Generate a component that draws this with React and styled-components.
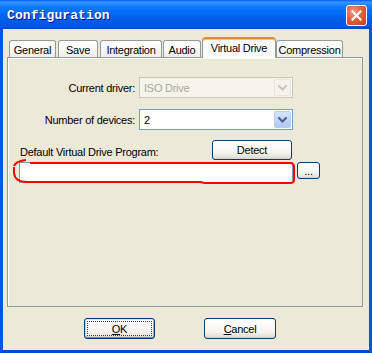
import React from 'react';
import styled, { createGlobalStyle, css } from 'styled-components';

const Global = createGlobalStyle`
  html, body { margin: 0; padding: 0; background: #ffffff; }
  body { font-family: "Liberation Sans", Arial, sans-serif; font-size: 11px; letter-spacing: -0.25px; }
  * { box-sizing: border-box; }
`;

const Window = styled.div`
  width: 372px;
  height: 353px;
  display: flex;
  flex-direction: column;
`;

const TitleBar = styled.div`
  height: 29px;
  flex: none;
  display: flex;
  align-items: center;
  justify-content: space-between;
  padding: 2px 5px 0 7px;
  background: linear-gradient(180deg, #0058ee 0%, #3a93ff 7%, #288eff 13%, #127dff 22%, #036ffc 38%, #0262ee 60%, #0057e5 80%, #0054e3 92%, #0043cf 100%);
`;

const Title = styled.span`
  font-family: "Liberation Mono", "DejaVu Sans Mono", monospace;
  font-weight: bold;
  font-size: 13px;
  color: #ffffff;
  text-shadow: 1px 1px 0 #0a1883;
  letter-spacing: 0.1px;
`;

const CloseButton = styled.div`
  width: 21px;
  height: 21px;
  border: 1px solid #ffffff;
  border-radius: 3px;
  background: radial-gradient(circle at 35% 30%, #f39a7c 0%, #e2603f 45%, #c63e1c 100%);
  display: flex;
  align-items: center;
  justify-content: center;
`;

const Client = styled.div`
  flex: 1;
  display: flex;
  flex-direction: column;
  background: #ece9d8;
  border-left: 3px solid #0055e5;
  border-right: 3px solid #0055e5;
  border-bottom: 3px solid #0048d8;
  padding: 8px 0 0 4px;
`;

const TabStrip = styled.div`
  height: 20px;
  margin-left: 2px;
  display: flex;
  align-items: flex-start;
  position: relative;
  z-index: 1;
`;

const Tab = styled.div`
  width: ${p => p.$w}px;
  margin-left: ${p => p.$ml}px;
  height: 17px;
  margin-top: 3px;
  border: 1px solid #919b9c;
  border-bottom: none;
  border-radius: 3px 3px 0 0;
  background: linear-gradient(180deg, #ffffff 0%, #fafaf8 40%, #f0efe8 100%);
  color: #000;
  display: flex;
  align-items: center;
  justify-content: center;
  padding-top: 1px;
  white-space: nowrap;
  ${p => p.$active && css`
    height: 21px;
    margin-top: 0;
    border-top: 2px solid #e68b2c;
    border-radius: 4px 4px 0 0;
    box-shadow: inset 0 1px 0 #ffc73c;
    background: #fcfcfe;
    align-items: flex-start;
    padding-top: 3px;
  `}
`;

const Panel = styled.div`
  width: 356px;
  height: 250px;
  border: 1px solid #919b9c;
  background: #ece9d8;
  box-shadow: inset 1px 1px 0 #fcfcfe;
  position: relative;
  padding: 19px 0 0 11px;
`;

const FieldGrid = styled.div`
  display: grid;
  grid-template-columns: 116px 154px;
  column-gap: 4px;
  row-gap: 11px;
  align-items: center;
`;

const RowLabel = styled.span`
  text-align: right;
  color: #000;
  white-space: nowrap;
`;

const Combo = styled.div`
  height: 21px;
  border: 1px solid ${p => (p.$disabled ? '#c9c7ba' : '#7f9db9')};
  background: ${p => (p.$disabled ? '#f5f4ea' : '#ffffff')};
  display: flex;
  align-items: center;
  padding: 1px;
`;

const ComboText = styled.span`
  flex: 1;
  padding-left: 3px;
  color: ${p => (p.$disabled ? '#aca899' : '#000')};
`;

const ComboArrow = styled.div`
  width: 17px;
  height: 17px;
  border-radius: 2px;
  display: flex;
  align-items: center;
  justify-content: center;
  ${p => p.$disabled
    ? css`
      background: #f4f3ee;
      border: 1px solid #e8e6dc;
    `
    : css`
      background: linear-gradient(180deg, #d9e4fd 0%, #c4d5fd 50%, #b3c8f7 100%);
      border: 1px solid #b9cdf8;
    `}
`;

const ProgramSection = styled.div`
  width: 274px;
  margin-top: 10px;
  display: flex;
  flex-direction: column;
  gap: 2px;
`;

const ProgramHeader = styled.div`
  display: flex;
  justify-content: space-between;
  align-items: flex-end;
  padding-left: 1px;
  padding-right: 1px;
`;

const PlainLabel = styled.span`
  color: #000;
  white-space: nowrap;
  line-height: 13px;
  padding-bottom: 1px;
`;

const ProgramRow = styled.div`
  display: flex;
  align-items: flex-start;
  gap: 4px;
`;

const TextField = styled.div`
  width: 274px;
  flex: none;
  height: 21px;
  border: 1px solid #7f9db9;
  background: #ffffff;
`;

const Button = styled.div`
  width: ${p => p.$w}px;
  height: ${p => p.$h}px;
  flex: none;
  border: 1px solid #003c74;
  border-radius: 3px;
  background: linear-gradient(180deg, #ffffff 0%, #fbfbf9 35%, #f2f1eb 70%, #e3e1d8 90%, #d6d0c5 100%);
  color: #000;
  display: flex;
  align-items: center;
  justify-content: center;
  position: relative;
  white-space: nowrap;
  ${p => p.$default && css`
    box-shadow: inset 0 1px 0 #cee7ff, inset 0 -1px 0 #6982ee, inset 1px 0 0 #bcd4f6, inset -1px 0 0 #89ade4;
    &::after {
      content: '';
      position: absolute;
      inset: 2px;
      border: 1px dotted #4a3a50;
    }
  `}
`;

const ButtonRow = styled.div`
  display: flex;
  gap: 49px;
  margin-top: 11px;
  margin-left: 77px;
`;

const Annotation = styled.svg`
  position: absolute;
  left: 0;
  top: 0;
  pointer-events: none;
  overflow: visible;
`;

const Chevron = ({ color }) => (
  <svg width="9" height="6" viewBox="0 0 9 6">
    <path d="M1 1 L4.5 4.5 L8 1" fill="none" stroke={color} strokeWidth="2" strokeLinecap="square" />
  </svg>
);

const tabs = [
  { label: 'General', w: 47, ml: 0 },
  { label: 'Save', w: 40, ml: 2 },
  { label: 'Integration', w: 62, ml: 2 },
  { label: 'Audio', w: 38, ml: 1 },
  { label: 'Virtual Drive', w: 74, ml: 1, active: true },
  { label: 'Compression', w: 67, ml: 0 },
];

export default function App() {
  return (
    <>
      <Global />
      <Window>
        <TitleBar>
          <Title>Configuration</Title>
          <CloseButton>
            <svg width="11" height="11" viewBox="0 0 11 11">
              <path d="M1.5 1.5 L9.5 9.5 M9.5 1.5 L1.5 9.5" stroke="#ffffff" strokeWidth="2.2" strokeLinecap="square" />
            </svg>
          </CloseButton>
        </TitleBar>
        <Client>
          <TabStrip>
            {tabs.map(t => (
              <Tab key={t.label} $w={t.w} $ml={t.ml} $active={t.active}>{t.label}</Tab>
            ))}
          </TabStrip>
          <Panel>
            <FieldGrid>
              <RowLabel>Current driver:</RowLabel>
              <Combo $disabled>
                <ComboText $disabled>ISO Drive</ComboText>
                <ComboArrow $disabled><Chevron color="#c9c7ba" /></ComboArrow>
              </Combo>
              <RowLabel>Number of devices:</RowLabel>
              <Combo>
                <ComboText>2</ComboText>
                <ComboArrow><Chevron color="#4d6185" /></ComboArrow>
              </Combo>
            </FieldGrid>
            <ProgramSection>
              <ProgramHeader>
                <PlainLabel>Default Virtual Drive Program:</PlainLabel>
                <Button $w={80} $h={20}>Detect</Button>
              </ProgramHeader>
              <ProgramRow>
                <TextField />
                <Button $w={23} $h={17}>...</Button>
              </ProgramRow>
            </ProgramSection>
            <Annotation width="354" height="248">
              <g transform="translate(-8,-58)" fill="none" stroke="#ff0000" strokeWidth="2" strokeLinejoin="round">
                <path d="M14 166 Q16 161 26 160" />
                <path d="M30 163 L290 163 Q294 163 294 167 L294 180 Q294 183 290 183 L205 183 L200 182 L27 182 Q15 182 14 173 L14 167" />
              </g>
            </Annotation>
          </Panel>
          <ButtonRow>
            <Button $w={71} $h={21} $default><u>O</u>K</Button>
            <Button $w={72} $h={21}><u>C</u>ancel</Button>
          </ButtonRow>
        </Client>
      </Window>
    </>
  );
}
